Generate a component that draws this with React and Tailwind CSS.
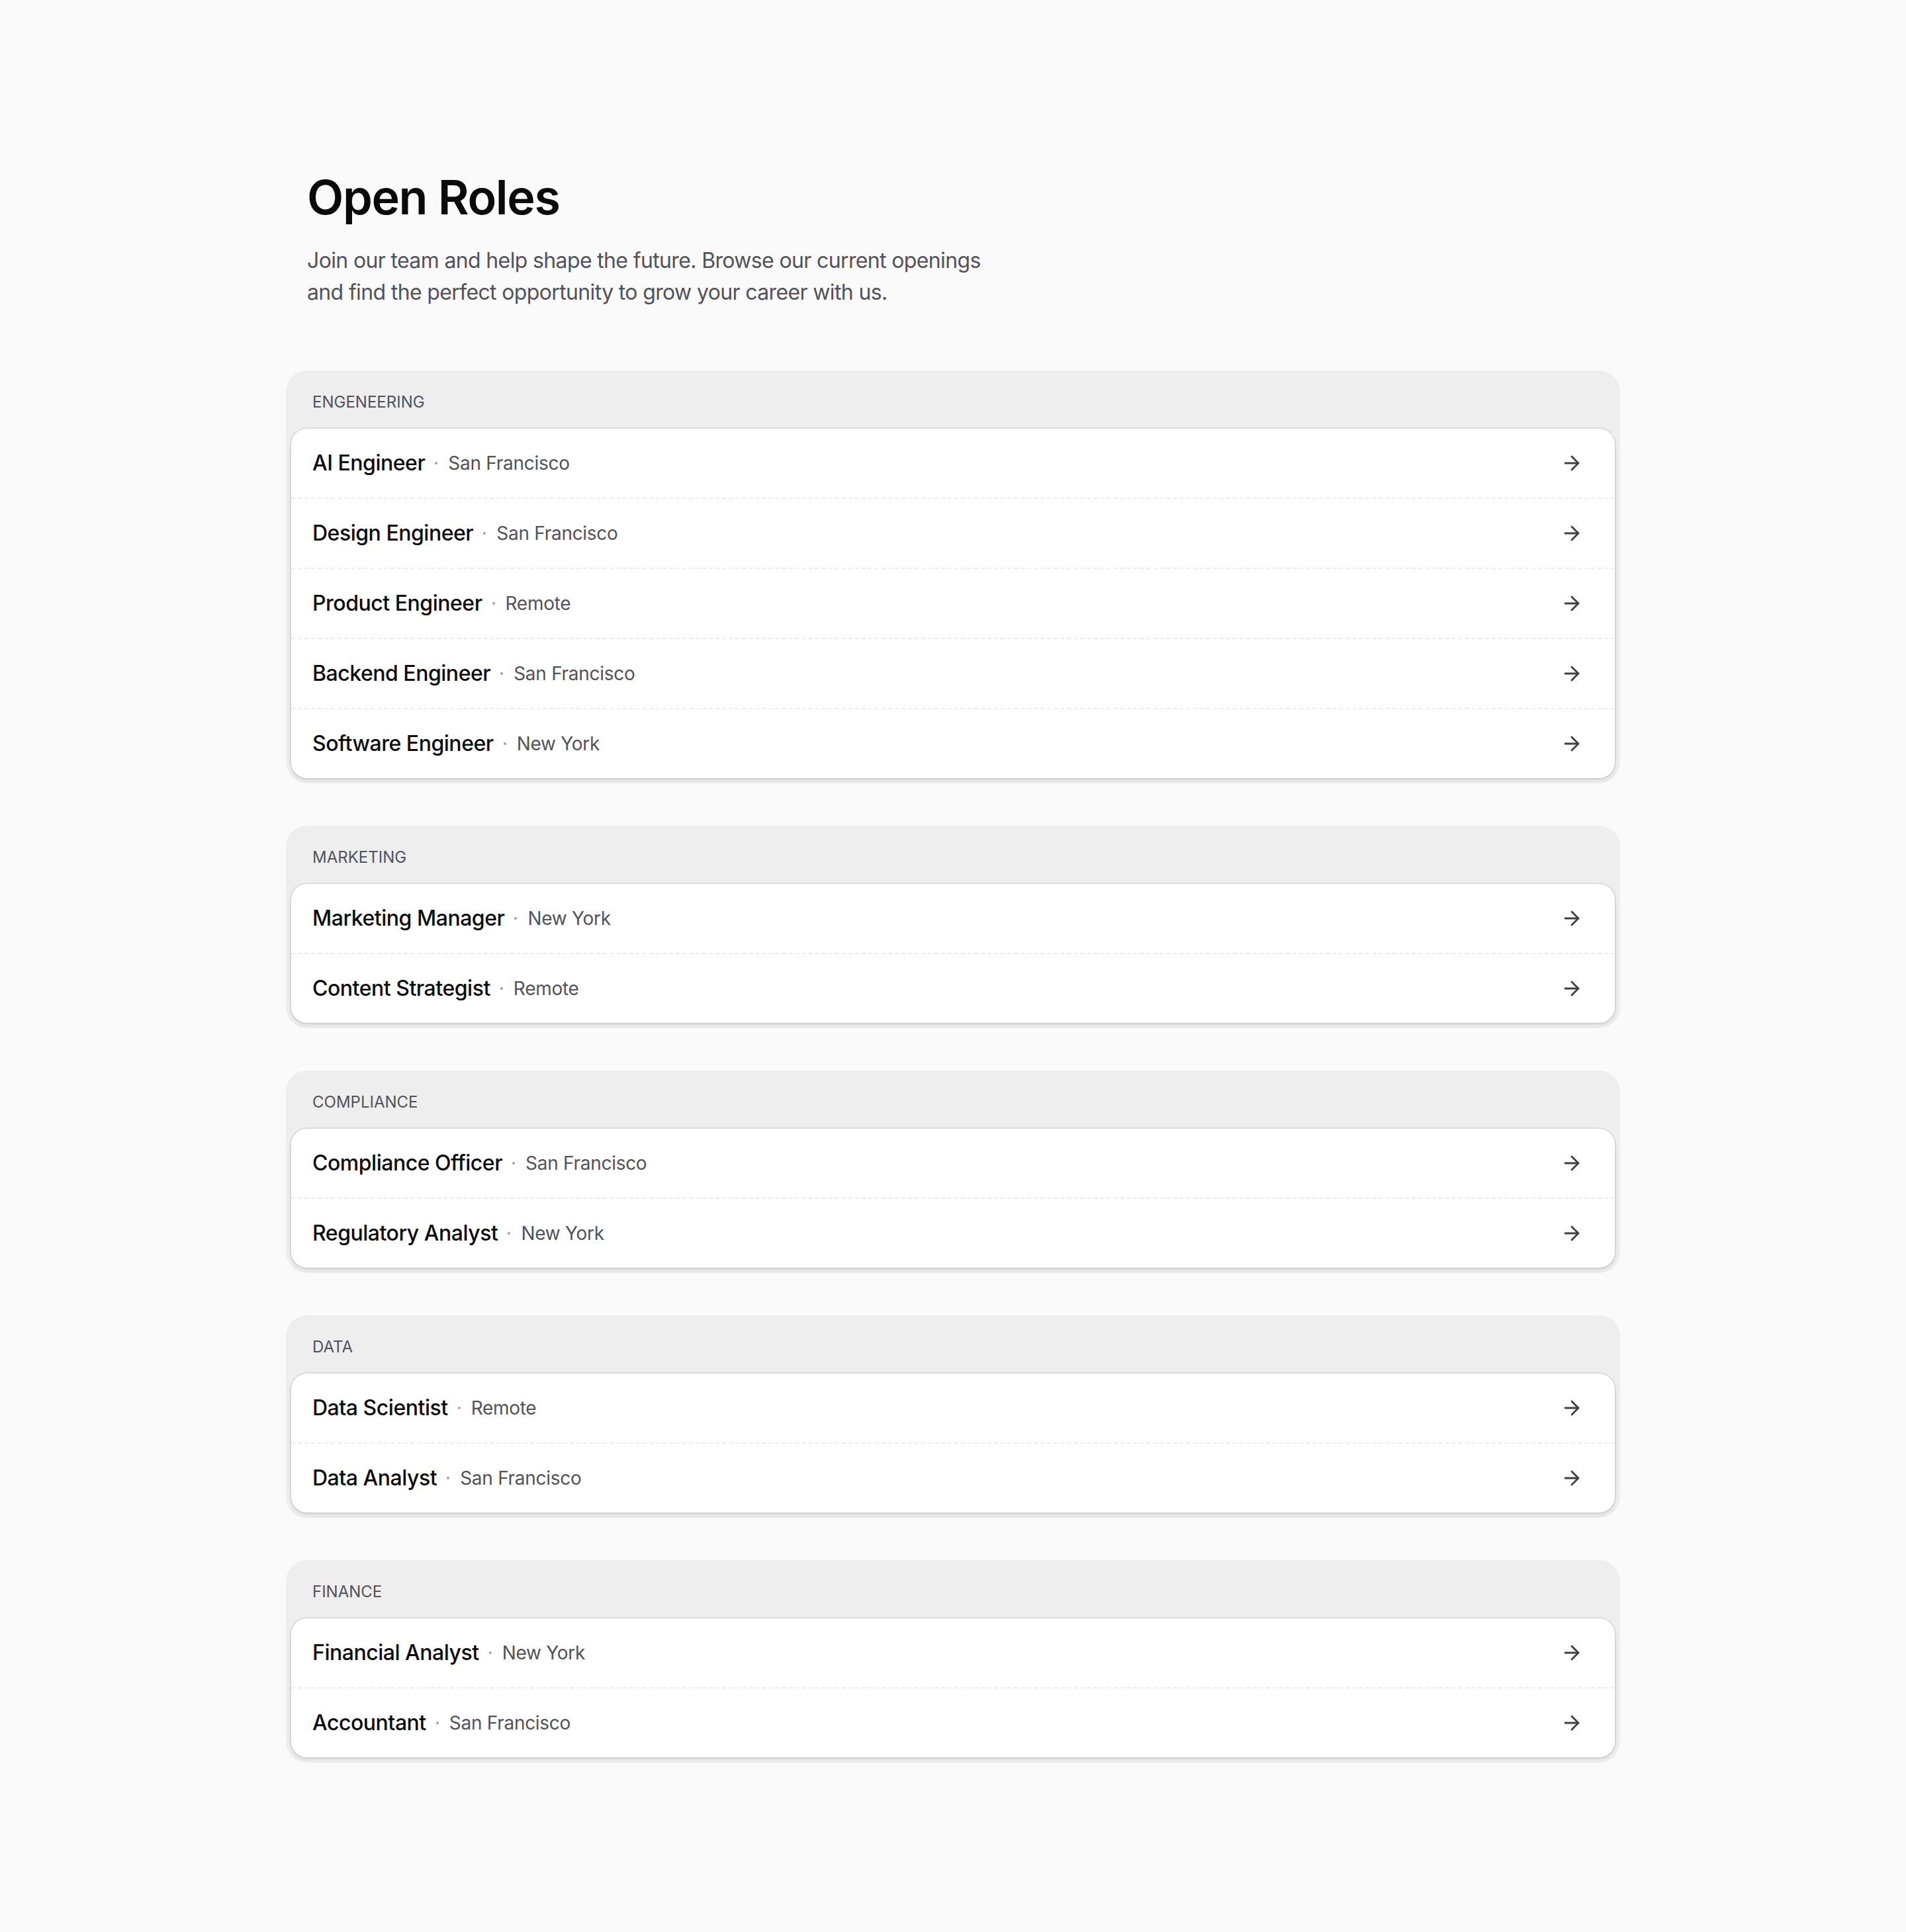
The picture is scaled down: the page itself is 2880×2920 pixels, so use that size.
import React from "react";

const departments = [
  {
    name: "Engeneering",
    roles: [
      { title: "AI Engineer", location: "San Francisco" },
      { title: "Design Engineer", location: "San Francisco" },
      { title: "Product Engineer", location: "Remote" },
      { title: "Backend Engineer", location: "San Francisco" },
      { title: "Software Engineer", location: "New York" },
    ],
  },
  {
    name: "Marketing",
    roles: [
      { title: "Marketing Manager", location: "New York" },
      { title: "Content Strategist", location: "Remote" },
    ],
  },
  {
    name: "Compliance",
    roles: [
      { title: "Compliance Officer", location: "San Francisco" },
      { title: "Regulatory Analyst", location: "New York" },
    ],
  },
  {
    name: "Data",
    roles: [
      { title: "Data Scientist", location: "Remote" },
      { title: "Data Analyst", location: "San Francisco" },
    ],
  },
  {
    name: "Finance",
    roles: [
      { title: "Financial Analyst", location: "New York" },
      { title: "Accountant", location: "San Francisco" },
    ],
  },
];

function ArrowRight() {
  return (
    <svg
      width="34"
      height="34"
      viewBox="0 0 24 24"
      fill="none"
      stroke="currentColor"
      strokeWidth="2"
      strokeLinecap="round"
      strokeLinejoin="round"
    >
      <path d="M5 12h14" />
      <path d="m12 5 7 7-7 7" />
    </svg>
  );
}

function RoleRow({ role, last }) {
  return (
    <a
      href="#"
      className={
        "flex items-center justify-between pl-[32px] pr-[48px] " +
        (last ? "h-[104px]" : "h-[106px] border-b-2 border-dashed border-[#ececec]")
      }
    >
      <div className="flex items-center">
        <span className="text-[32px] leading-[48px] font-medium tracking-[-0.015em] text-[#0a0a0a]">
          {role.title}
        </span>
        <span className="ml-[15px] mr-[16px] h-[4px] w-[4px] rounded-full bg-[#a1a1aa]" />
        <span className="text-[28px] leading-[40px] tracking-[-0.01em] text-[#52525b]">
          {role.location}
        </span>
      </div>
      <span className="text-[#3f3f46]">
        <ArrowRight />
      </span>
    </a>
  );
}

function Department({ dept }) {
  return (
    <section className="rounded-[32px] bg-[#eeeeee] p-[8px]">
      <h2 className="px-[32px] py-[24px] text-[24px] leading-[32px] uppercase text-[#52525b]">
        {dept.name}
      </h2>
      <div className="rounded-[24px] bg-white shadow-[0_0_0_2px_rgba(0,0,0,0.07),0_4px_6px_rgba(0,0,0,0.07)]">
        {dept.roles.map((role, i) => (
          <RoleRow
            key={role.title}
            role={role}
            last={i === dept.roles.length - 1}
          />
        ))}
      </div>
    </section>
  );
}

export default function App() {
  return (
    <div
      className="min-h-screen bg-[#fafafa] py-[256px]"
      style={{ fontFamily: "Inter, 'Noto Sans', sans-serif" }}
    >
      <div className="mx-auto w-[2016px]">
        <header className="px-[32px] pt-[2px]">
          <h1 className="text-[72px] leading-[80px] font-semibold tracking-[-0.02em] text-[#0a0a0a]">
            Open Roles
          </h1>
          <p className="mt-[32px] max-w-[1040px] text-[32px] leading-[48px] tracking-[-0.02em] text-[#52525b]">
            Join our team and help shape the future. Browse our current openings
            and find the perfect opportunity to grow your career with us.
          </p>
        </header>
        <div className="mt-[94px] flex flex-col gap-[64px]">
          {departments.map((dept) => (
            <Department key={dept.name} dept={dept} />
          ))}
        </div>
      </div>
    </div>
  );
}
